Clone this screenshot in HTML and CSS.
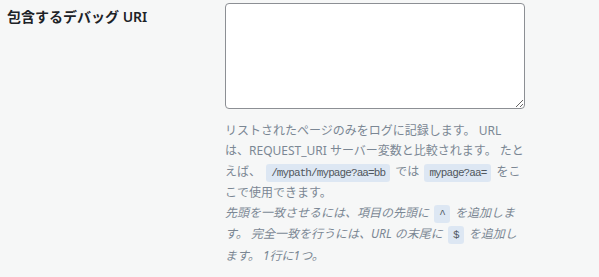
FILE: index.html
```html
<!DOCTYPE html>
<html lang="ja">
<head>
  <meta charset="UTF-8" />
  <meta name="viewport" content="width=device-width, initial-scale=1.0"/>
  <title>デバッグ設定</title>
  <link rel="stylesheet" href="styles.css">
</head>
<body>
  <div class="setting-row">
    <label class="setting-label" for="debugUris">包含するデバッグ URI</label>
    <div class="setting-field">
      <textarea id="debugUris" class="uri-list"></textarea>
      <p class="description">リストされたページのみをログに記録します。 URL は、REQUEST_URI サーバー変数と比較されます。 たとえば、 <code>/mypath/mypage?aa=bb</code> では <code>mypage?aa=</code> をここで使用できます。</p>
      <p class="description hint">先頭を一致させるには、項目の先頭に <code>^</code> を追加します。 完全一致を行うには、URL の末尾に <code>$</code> を追加します。 1行に1つ。</p>
    </div>
  </div>
</body>
</html>
```

FILE: styles.css
```css
body {
  font-family: "Noto Sans", "Noto Sans CJK JP", sans-serif;
  background-color: #f6f7f7;
  color: #1d2327;
  margin: 0;
}
.setting-row {
  display: flex;
}
.setting-label {
  width: 225px;
  flex-shrink: 0;
  padding: 7px 0 0 7px;
  box-sizing: border-box;
  font-size: 14px;
  font-weight: 600;
  line-height: 20px;
}
.setting-field {
  padding-top: 3px;
  width: 300px;
}
.uri-list {
  display: block;
  width: 300px;
  height: 106px;
  box-sizing: border-box;
  border: 1px solid #8c8f94;
  border-radius: 4px;
  background: #fff;
  margin: 0;
}
.description {
  margin: 0;
  font-size: 12px;
  line-height: 20.3px;
  color: #7b8794;
}
.setting-field .uri-list + .description {
  margin-top: 12px;
}
.hint {
  font-style: italic;
}
.description code {
  font-family: "Liberation Mono", monospace;
  font-style: normal;
  font-size: 11px;
  letter-spacing: -0.9px;
  color: #50575e;
  background: #dde7f3;
  border-radius: 3px;
  padding: 3px 5px 3px;
  margin: 0 2px;
}
```
